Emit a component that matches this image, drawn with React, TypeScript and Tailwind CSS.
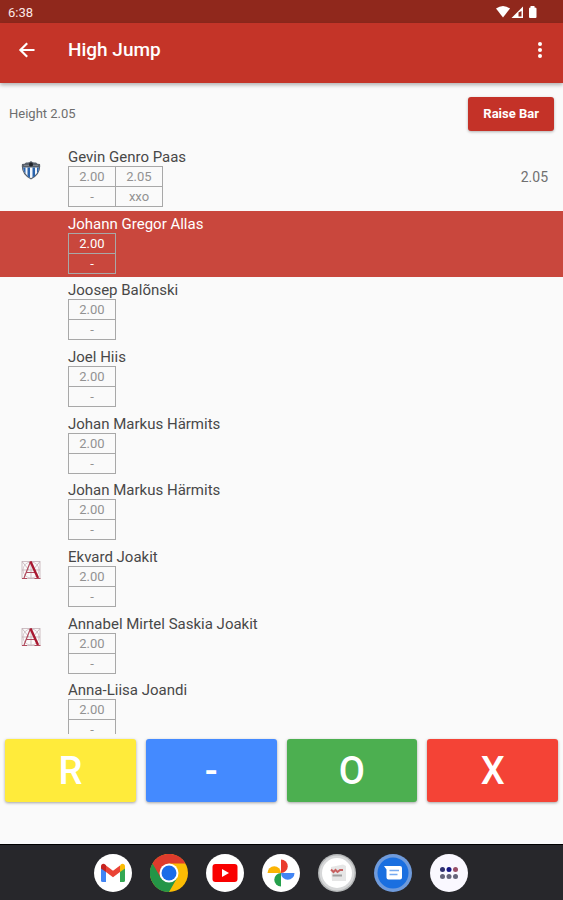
import * as React from 'react';
import clsx from 'clsx';

type Attempt = { height: string; marks: string };

type Athlete = {
  name: string;
  club?: 'shield' | 'letter';
  attempts: Attempt[];
  best?: string;
  active?: boolean;
};

const opening: Attempt[] = [{ height: '2.00', marks: '-' }];

const athletes: Athlete[] = [
  {
    name: 'Gevin Genro Paas',
    club: 'shield',
    attempts: [
      { height: '2.00', marks: '-' },
      { height: '2.05', marks: 'xxo' },
    ],
    best: '2.05',
  },
  { name: 'Johann Gregor Allas', attempts: opening, active: true },
  { name: 'Joosep Balõnski', attempts: opening },
  { name: 'Joel Hiis', attempts: opening },
  { name: 'Johan Markus Härmits', attempts: opening },
  { name: 'Johan Markus Härmits', attempts: opening },
  { name: 'Ekvard Joakit', club: 'letter', attempts: opening },
  { name: 'Annabel Mirtel Saskia Joakit', club: 'letter', attempts: opening },
  { name: 'Anna-Liisa Joandi', attempts: opening },
];

const actions = [
  { label: 'R', color: 'bg-[#ffeb3b]' },
  { label: '-', color: 'bg-[#448aff]' },
  { label: 'O', color: 'bg-[#4caf50]' },
  { label: 'X', color: 'bg-[#f44336]' },
];

const ShieldLogo: React.FC = () => (
  <svg viewBox="0 0 20 20" className="size-5" aria-hidden="true">
    <path d="M1 4Q4 4 5 2.500Q8 3 10 1Q12 3 15 2.500Q16 4 19 4Q20.500 14 10 19.500Q-0.500 14 1 4Z" fill="#59616b" />
    <path d="M2 7.500H18Q17.500 14 10 18.300Q2.500 14 2 7.500Z" fill="#f4f7fb" />
    <path d="M2 7.500H4.500V14Q2.300 11.500 2 7.500ZM6.500 7.500H9V17.800L6.500 16.300ZM11.500 7.500H14V16L11.500 17.500ZM16 7.500H18Q17.700 11 16 14Z" fill="#2a64ad" />
    <path d="M3 5.500H8M12 5.500H17" stroke="#7e858d" strokeWidth="1" />
    <circle cx="10" cy="4.500" r="2" fill="#20242a" />
  </svg>
);

const LetterLogo: React.FC = () => (
  <svg viewBox="0 0 20 20" className="size-5" fill="none" aria-hidden="true">
    <path
      d="M1 1.500H19V18.500H1ZM1 10H19M10 1.500V18.500M1 1.500L8 10M19 1.500L12 10"
      stroke="#b9a4ab"
      strokeWidth="0.700"
    />
    <circle cx="10" cy="10" r="8" stroke="#c4adb4" strokeWidth="0.600" />
    <path d="M9.500 1.500L3 18M5.500 12.500H14" stroke="#b04a5d" strokeWidth="1.200" />
    <path d="M9.500 1.500L17 18" stroke="#a81830" strokeWidth="2.400" />
    <path d="M1 18.500H6M13.500 18.500H19.500" stroke="#b04a5d" strokeWidth="1.200" />
  </svg>
);

const StatusBar: React.FC = () => (
  <div className="flex h-[23px] shrink-0 items-center justify-between bg-[#90281c] pl-2 pr-[25px] text-[13px] text-[#fbe9e7]">
    <span className="pt-[3px]">6:38</span>
    <svg width="42" height="14" viewBox="0 0 42 14" fill="#fff" aria-hidden="true">
      <path d="M0 3.500Q7 -1.500 14 3.500L7 12.500Z" />
      <path d="M27 1.500V13H15.500Z" />
      <path d="M25.500 6V11.500H22.500V7.500Z" fill="#90281c" />
      <path d="M33 3.500Q33 2.500 34.500 2.500V1H38.500V2.500Q40.500 2.500 40.500 3.500V12Q40.500 13 39.500 13H34Q33 13 33 12Z" />
    </svg>
  </div>
);

const AppBar: React.FC = () => (
  <header className="z-10 flex h-[60px] shrink-0 items-center bg-[#c43428] px-[18px] pb-[7px] text-white shadow-[0_2px_4px_rgba(0,0,0,0.3)]">
    <button type="button" aria-label="Back" className="w-[50px]">
      <svg viewBox="0 0 18 18" className="size-[18px]" fill="none" stroke="currentColor" strokeWidth="2.200" aria-hidden="true">
        <path d="M16.500 9H3M9.200 2.200L2.400 9L9.200 15.800" />
      </svg>
    </button>
    <h1 className="flex-1 pt-px text-[19px] font-medium">High Jump</h1>
    <button type="button" aria-label="More options">
      <svg viewBox="0 0 10 18" className="h-[18px] w-[10px]" fill="currentColor" aria-hidden="true">
        <circle cx="5" cy="3" r="2" />
        <circle cx="5" cy="9" r="2" />
        <circle cx="5" cy="15" r="2" />
      </svg>
    </button>
  </header>
);

const AthleteRow: React.FC<{ athlete: Athlete }> = ({ athlete }) => {
  const { name, club, attempts, best, active } = athlete;
  const cell = 'w-[47px] border border-[#a8a8a8] p-0 text-center font-normal';

  return (
    <li
      className={clsx(
        'flex items-start',
        active ? 'bg-[#c9473d] text-white' : 'text-[#484848]',
      )}
    >
      <div className="w-[68px] shrink-0 pl-[21px] pt-4">
        {club === 'shield' && <ShieldLogo />}
        {club === 'letter' && <LetterLogo />}
      </div>
      <div className="flex-1 pt-1">
        <p className="text-[15px] leading-[18px]">{name}</p>
        <table
          className={clsx(
            'w-min table-fixed border-collapse text-[13px] leading-[19px]',
            active ? 'text-white' : 'text-[#929292]',
          )}
        >
          <thead>
            <tr>
              {attempts.map((a) => (
                <th key={a.height} scope="col" className={clsx(cell, active && 'font-medium')}>
                  {a.height}
                </th>
              ))}
            </tr>
          </thead>
          <tbody>
            <tr>
              {attempts.map((a) => (
                <td key={a.height} className={cell}>
                  {a.marks}
                </td>
              ))}
            </tr>
          </tbody>
        </table>
      </div>
      {best && (
        <span className="self-center pr-[15px] text-[14px] text-[#707070]">{best}</span>
      )}
    </li>
  );
};

const dockIcon = 'size-[38px]';

const Dock: React.FC = () => (
  <nav
    aria-label="Apps"
    className="flex h-14 shrink-0 items-center justify-center gap-[18px] border-t border-black bg-[#27272b] pr-px"
  >
    <button type="button" aria-label="Gmail">
      <svg viewBox="0 0 38 38" className={dockIcon}>
        <circle cx="19" cy="19" r="19" fill="#fff" />
        <path d="M7 13V26.500Q7 28 8.500 28H12V16Z" fill="#4285f4" />
        <path d="M26 16V28H29.500Q31 28 31 26.500V13Z" fill="#34a853" />
        <path d="M26 12V18L31 14.500V12.500C31 10 28.500 9 26.500 10.700Z" fill="#fbbc04" />
        <path d="M12 11.500L19 16.800L26 11.500V18L19 23.300L12 18Z" fill="#ea4335" />
        <path d="M7 12.500C7 10 9.500 9 11.500 10.700L12 11.200V18L7 14.500Z" fill="#c5221f" />
      </svg>
    </button>
    <button type="button" aria-label="Chrome">
      <svg viewBox="0 0 38 38" className={dockIcon}>
        <circle cx="19" cy="19" r="19" fill="#fbbc04" />
        <path d="M19 19L2.500 9.500A19 19 0 0 0 19 38L27.200 23.700Z" fill="#249547" />
        <path d="M19 9.500H35.500A19 19 0 0 0 2.500 9.500L10.800 23.700Z" fill="#de3b2c" />
        <circle cx="19" cy="19" r="9.500" fill="#fff" />
        <circle cx="19" cy="19" r="7.500" fill="#1a6ce8" />
      </svg>
    </button>
    <button type="button" aria-label="YouTube">
      <svg viewBox="0 0 38 38" className={dockIcon}>
        <circle cx="19" cy="19" r="19" fill="#fff" />
        <rect x="6.500" y="10" width="25" height="18" rx="3" fill="#f90000" />
        <path d="M16 15L23 19L16 23Z" fill="#fff" />
      </svg>
    </button>
    <button type="button" aria-label="Photos">
      <svg viewBox="0 0 38 38" className={dockIcon}>
        <circle cx="19" cy="19" r="19" fill="#fff" />
        <path d="M19 5.500A6.750 6.750 0 0 1 19 19Z" fill="#ea3b2d" />
        <path d="M32.500 19A6.750 6.750 0 0 1 19 19Z" fill="#4285f4" />
        <path d="M19 32.500A6.750 6.750 0 0 1 19 19Z" fill="#26a04c" />
        <path d="M5.500 19A6.750 6.750 0 0 1 19 19Z" fill="#fbb404" />
      </svg>
    </button>
    <button type="button" aria-label="Results">
      <svg viewBox="0 0 38 38" className={dockIcon}>
        <circle cx="19" cy="19" r="19" fill="#b5b7b8" />
        <circle cx="19" cy="19" r="17.500" fill="#d7d8d9" />
        <circle cx="19" cy="19" r="15" fill="#fff" />
        <path d="M13 13L25 10.500L28 12V27H14Z" fill="#e6e6e6" />
        <path d="M13 15.500L15.500 18L17.500 16L19.500 18L22 16H25" stroke="#c86060" strokeWidth="2" fill="none" />
        <path d="M14.500 21.500H24" stroke="#a0a0a0" strokeWidth="2" />
      </svg>
    </button>
    <button type="button" aria-label="Messages">
      <svg viewBox="0 0 38 38" className={dockIcon}>
        <circle cx="19" cy="19" r="19" fill="#6f9bdc" />
        <circle cx="19" cy="19" r="15.500" fill="#1a6fe0" />
        <path d="M10 12H26Q28 12 28 14V23.500Q28 25.500 26 25.500H14.500Q12.500 25.500 12.500 23.500V15.500Z" fill="#fff" />
        <path d="M15.500 16.500H25M15.500 20.500H23.500" stroke="#75a9f0" strokeWidth="1.500" />
      </svg>
    </button>
    <button type="button" aria-label="All apps">
      <svg viewBox="0 0 38 38" className={dockIcon} fill="#65647a">
        <circle cx="19" cy="19" r="19" fill="#faf8ff" />
        <circle cx="12.500" cy="15.500" r="2.500" fill="#303070" />
        <circle cx="19" cy="15.500" r="2.500" fill="#151585" />
        <circle cx="25.500" cy="15.500" r="2.500" fill="#994f68" />
        <circle cx="12.500" cy="22.500" r="2.500" />
        <circle cx="19" cy="22.500" r="2.500" />
        <circle cx="25.500" cy="22.500" r="2.500" />
      </svg>
    </button>
  </nav>
);

const App: React.FC = () => {
  return (
    <div className="flex h-screen flex-col bg-[#fafafa] font-[Roboto,sans-serif]">
      <StatusBar />
      <AppBar />

      <div className="flex h-[61px] shrink-0 items-center justify-between px-[9px]">
        <span className="text-[13px] text-[#6e6e6e]">Height 2.05</span>
        <button
          type="button"
          className="h-[34px] rounded-[3px] bg-[#c43228] px-[15px] text-[13px] font-bold text-white shadow-[0_1px_3px_rgba(0,0,0,0.3)]"
        >
          Raise Bar
        </button>
      </div>

      <main className="min-h-0 flex-1 overflow-hidden">
        <ul className="grid h-[600px] auto-rows-fr">
          {athletes.map((athlete, i) => (
            <AthleteRow key={i} athlete={athlete} />
          ))}
        </ul>
      </main>

      <div className="grid shrink-0 grid-cols-4 gap-[10px] px-[5px] pb-[42px] pt-[5px]">
        {actions.map(({ label, color }) => (
          <button
            key={label}
            type="button"
            className={clsx(
              'h-[63px] rounded-[3px] text-[38px] font-medium leading-none text-white shadow-[0_1px_3px_rgba(0,0,0,0.35)]',
              color,
            )}
          >
            {label}
          </button>
        ))}
      </div>

      <Dock />
    </div>
  );
};

export default App;
